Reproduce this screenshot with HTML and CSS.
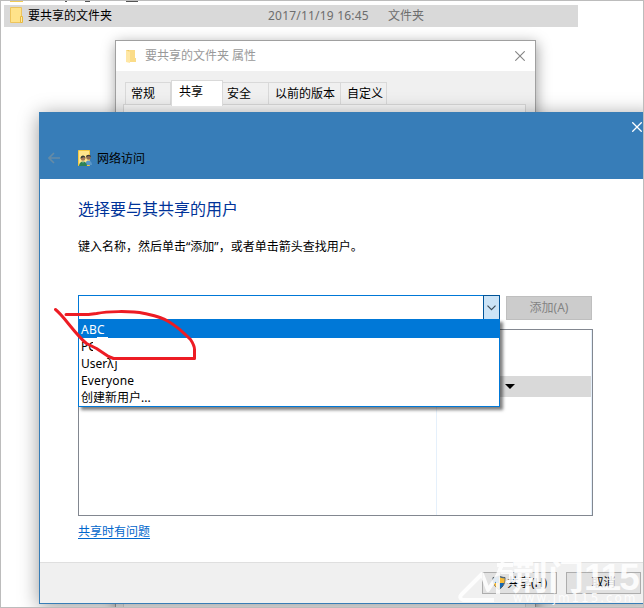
FILE: index.html
```html
<!DOCTYPE html>
<html lang="zh-CN">
<head>
<meta charset="utf-8">
<title>网络访问</title>
<link rel="stylesheet" href="styles.css">
</head>
<body>
<main class="desktop">
  <div class="file-row">
    <svg class="folder" width="14" height="17" viewBox="0 0 14 17"><path d="M1.500.5h11v15h-11z" fill="#ffe38a" stroke="#edc45c"/><path d="M11.500 15.500v-6h2v6z" fill="#ffe9a5" stroke="#e8b93c"/></svg>
    <span class="file-name">要共享的文件夹</span>
    <span class="file-date">2017/11/19 16:45</span>
    <span class="file-type">文件夹</span>
  </div>
  <i class="speck speck-folder"></i><i class="speck speck-a"></i><i class="speck speck-b"></i><i class="speck speck-c"></i>

  <section class="props">
    <header class="props-title">
      <svg width="11" height="14" viewBox="0 0 11 14"><path d="M0 1h4v12H0z" fill="#f0cb68"/><path d="M3 1h6v8h1v4H3z" fill="#fbdc88"/><path d="M0 1l4 2v11l-4-1z" fill="#ffe7a5"/></svg>
      <span>要共享的文件夹 属性</span>
      <svg class="props-close" width="10" height="10" viewBox="0 0 10 10"><path d="M.3.3l9.400 9.400M9.700.3L.3 9.700" stroke="#858585" stroke-width="1.1"/></svg>
    </header>
    <nav class="tabs">
      <span class="tab general">常规</span><span class="tab active">共享</span><span class="tab security">安全</span><span class="tab previous">以前的版本</span><span class="tab custom">自定义</span>
    </nav>
    <div class="pane"></div>
  </section>

  <section class="wizard">
    <header class="wizard-head">
      <svg class="wizard-close" width="10" height="10" viewBox="0 0 10 10"><path d="M.3.3l9.400 9.400M9.700.3L.3 9.700" stroke="#fff" stroke-width="1.3"/></svg>
      <div class="wizard-title">
        <svg class="back" width="12" height="12" viewBox="0 0 12 12"><path d="M12 6H1M6 1L1 6l5 5" fill="none" stroke="#658ba6" stroke-width="1.6"/></svg>
        <svg class="net" width="15" height="17" viewBox="0 0 15 17"><path d="M.5.5h11v15H.5z" fill="#ffe48b" stroke="#f4c842"/><circle cx="10.500" cy="7.500" r="2.300" fill="#8f6a55"/><path d="M8 7c0-3 5-3 5 0l-2-1z" fill="#3b3833"/><path d="M7 15c0-6 7-6 7 0z" fill="#5a97c8"/><circle cx="5" cy="8.500" r="2.300" fill="#a37858"/><path d="M2.500 8.500c0-4 5-4 5 0L6 7z" fill="#343b38"/><path d="M1 16c0-6 8-6 8 0z" fill="#2d8357"/><path d="M4.500 11.500h1l-.5 2z" fill="#d9e5db"/></svg>
        <span>网络访问</span>
      </div>
    </header>
    <div class="wizard-body">
      <h1>选择要与其共享的用户</h1>
      <p>键入名称，然后单击<q>添加</q>，或者单击箭头查找用户。</p>
      <div class="entry">
        <div class="combo">
          <div class="combo-button"><svg width="9" height="6" viewBox="0 0 9 6"><path d="M.5.7l4 4 4-4" fill="none" stroke="#3d4c59" stroke-width="1.2"/></svg></div>
          <ul class="menu">
            <li class="selected">ABC</li>
            <li>P<span class="pc">C</span></li>
            <li>User<span class="smudge">λj</span></li>
            <li>Everyone</li>
            <li>创建新用户...</li>
          </ul>
        </div>
        <button class="add">添加(A)</button>
      </div>
      <div class="list">
        <div class="names"></div>
        <div class="levels"><div class="level-row"><svg width="10" height="5" viewBox="0 0 10 5"><path d="M0 0h10L5 5z"/></svg></div></div>
      </div>
      <a class="help">共享时有问题</a>
    </div>
    <footer>
      <button class="share"><svg width="14" height="15" viewBox="0 0 14 15"><path d="M7 1c2 1 4 1.500 6 1.500 0 5-1 9-6 12-5-3-6-7-6-12C3 2.500 5 2 7 1z" fill="#1768b0" stroke="#535b61"/><path d="M7 2v6h5.300c.3-1.500.4-3 .4-4.800C10.500 3.200 9 3 7 2zM7 8H1.700c.8 3 2.500 4.700 5.300 6z" fill="#f9bb35"/></svg><span>共享(H)</span></button>
      <button class="cancel">取消</button>
    </footer>
  </section>

  <svg class="scribble" width="150" height="60" viewBox="0 0 150 60"><path d="M1.500 2.500c8 6 19 24 31 34l10 5 12 8 5 2h81v-9c0-4-2-7-4-10-8-8-15-14-22-18-8-5-15-6-24-8-15-3-38-2-48 0l-8 1H12" fill="none" stroke="#ed1c24" stroke-width="3" stroke-linejoin="round" stroke-linecap="round"/><path d="M43 30.500h11" stroke="#fff"/></svg>

  <div class="watermark">
    <svg width="58" height="43" viewBox="0 0 58 43"><g fill="none" stroke="#fff" stroke-width="4" stroke-linejoin="round"><path d="M36 39H5q-5-2-1-6L24 13l6 16 10-15v19"/><path d="M39 4h16M45 1l-6 15M43 11h10v8l-4 3"/></g></svg>
    <div class="brand"><strong>荆门<b>115</b></strong><span>www.jm115.com</span></div>
  </div>
</main>
</body>
</html>
```
FILE: styles.css
```css
* { box-sizing: border-box; }
body { margin: 0; font: 12px/17px "Noto Sans", "Noto Sans CJK SC", sans-serif; color: #000; }
.desktop { position: relative; width: 644px; height: 608px; overflow: hidden; background: #fff; }
.desktop::after { content: ""; position: absolute; inset: 0; border: 1px solid #bcbcbc; }
.file-row { display: flex; align-items: center; width: 574px; height: 22px; margin-left: 4px; padding: 0 0 1px 5px; background: #d9d9d9; position: relative; top: 5px; white-space: nowrap; }
.folder { margin-right: 5px; }
.file-name { width: 240px; }
.file-date { width: 120px; color: #6d6d6d; letter-spacing: .2px; }
.file-type { color: #6d6d6d; }
.speck { position: absolute; top: 0; height: 2px; background: #555; }
.speck-folder { left: 10px; width: 13px; background: #f0cb58; }
.speck-a { left: 65px; width: 2px; }
.speck-b { left: 85px; width: 5px; }
.speck-c { left: 126px; width: 12px; }

.props { position: absolute; left: 115px; top: 40px; width: 421px; height: 580px; border: 1px solid #a0a0a0; background: #f0f0f0; box-shadow: 1px 3px 13px rgba(0,0,0,.38); }
.props-title { display: flex; align-items: center; height: 30px; padding: 0 10px 1px; background: #fff; color: #999; }
.props-title span { margin-left: 8px; }
.props-close { margin-left: auto; }
.tabs { display: flex; align-items: flex-end; height: 34px; padding-left: 9px; }
.tab { height: 23px; padding: 2px 0 0 5px; border: 1px solid #d9d9d9; border-bottom: 0; border-left: 0; white-space: nowrap; }
.general { width: 46px; border-left: 1px solid #d9d9d9; }
.active { width: 52px; height: 26px; padding: 2px 0 0 7px; background: #fff; border-left: 1px solid #d9d9d9; margin-bottom: -1px; z-index: 1; }
.security { width: 46px; padding-left: 4px; }
.previous { width: 72px; padding-left: 6px; }
.custom { width: 46px; padding-left: 6px; }
.pane { width: 403px; height: 504px; margin: -1px 0 0 7px; background: #f9f9f9; border: 1px solid #d9d9d9; }

.wizard { position: absolute; left: 39px; top: 112px; width: 620px; height: 492px; display: flex; flex-direction: column; border: 1px solid #387db6; background: #fff; box-shadow: 0 3px 19px rgba(0,0,0,.4); }
.wizard-head { height: 66px; background: #377db8; padding-top: 9px; }
.wizard-close { display: block; margin-left: 592px; }
.wizard-title { display: flex; align-items: center; height: 18px; margin: 17px 0 0 8px; }
.back { margin-right: 18px; }
.net { margin-right: 4px; }
.wizard-body { height: 383px; padding: 18px 0 0 38px; }
h1 { margin: 0; font-size: 16px; line-height: 24px; font-weight: 400; color: #039; }
p { margin: 17px 0 0; line-height: 17px; white-space: nowrap; }
q { quotes: none; }
q::before { content: "“"; font-family: "Noto Sans"; }
q::after { content: "”"; font-family: "Noto Sans"; }
.entry { display: flex; gap: 6px; height: 25px; margin-top: 40px; }
.combo { position: relative; width: 422px; height: 25px; border: 1px solid #0078d7; display: flex; justify-content: flex-end; }
.combo-button { width: 17px; height: 25px; margin: -1px -1px 0 0; background: #cce4f7; border: 1px solid #005499; display: flex; align-items: center; justify-content: center; }
.menu { position: absolute; left: -1px; top: 23px; width: 422px; height: 88px; margin: 0; padding: 0; border: 1px solid #0078d7; border-top: 0; background: #fff; list-style: none; box-shadow: 3px 3px 3px rgba(0,0,0,.5); clip-path: inset(0 -8px -8px 0); }
.menu li { height: 17px; padding-left: 2px; line-height: 17px; }
.menu .selected { height: 19px; line-height: 21px; background: #0078d7; color: #fff; letter-spacing: .3px; }
.menu li:nth-child(4) { letter-spacing: .15px; }
.pc { display: inline-block; width: 5px; height: 15px; overflow: hidden; vertical-align: top; }
.smudge { letter-spacing: 1px; }
.add { width: 86px; height: 24px; margin: 1px 0 0; padding: 0 0 1px; border: 1px solid #bfbfbf; background: #ccc; color: #838383; font: inherit; }
.list { display: flex; width: 515px; height: 187px; margin-top: 9px; border: 1px solid #828790; }
.names { width: 358px; border-right: 1px solid #e5f0fb; }
.levels { width: 155px; padding-top: 46px; border-right: 1px solid #e5f0fb; }
.level-row { display: flex; align-items: center; height: 21px; padding-left: 68px; background: #d9d9d9; }
.help { display: inline-block; margin-top: 7px; color: #06c; text-decoration: underline; text-underline-offset: 2px; }
footer { display: flex; gap: 9px; height: 41px; padding: 9px 0 0 442px; border-top: 1px solid #dfdfdf; background: #f0f0f0; }
footer button { display: flex; align-items: center; justify-content: center; width: 75px; height: 22px; padding: 0 0 1px; border: 1px solid #adadad; background: #e1e1e1; font: inherit; white-space: nowrap; }
.share svg { margin-right: 1px; flex: none; }
.scribble { position: absolute; left: 54px; top: 307px; }
.watermark { position: absolute; left: 458px; top: 561px; width: 186px; height: 43px; display: flex; color: #fff; opacity: .87; }
.watermark svg { flex: none; }
.brand { display: flex; flex-direction: column; margin-left: -4px; white-space: nowrap; }
.brand strong { height: 31px; font-size: 36px; line-height: 31px; }
.brand b { font: 700 37px/31px "Liberation Sans", sans-serif; letter-spacing: -2px; }
.brand span { height: 12px; margin: 0 0 0 1px; font: 12px/12px "DejaVu Sans", sans-serif; letter-spacing: 1.9px; }
```
